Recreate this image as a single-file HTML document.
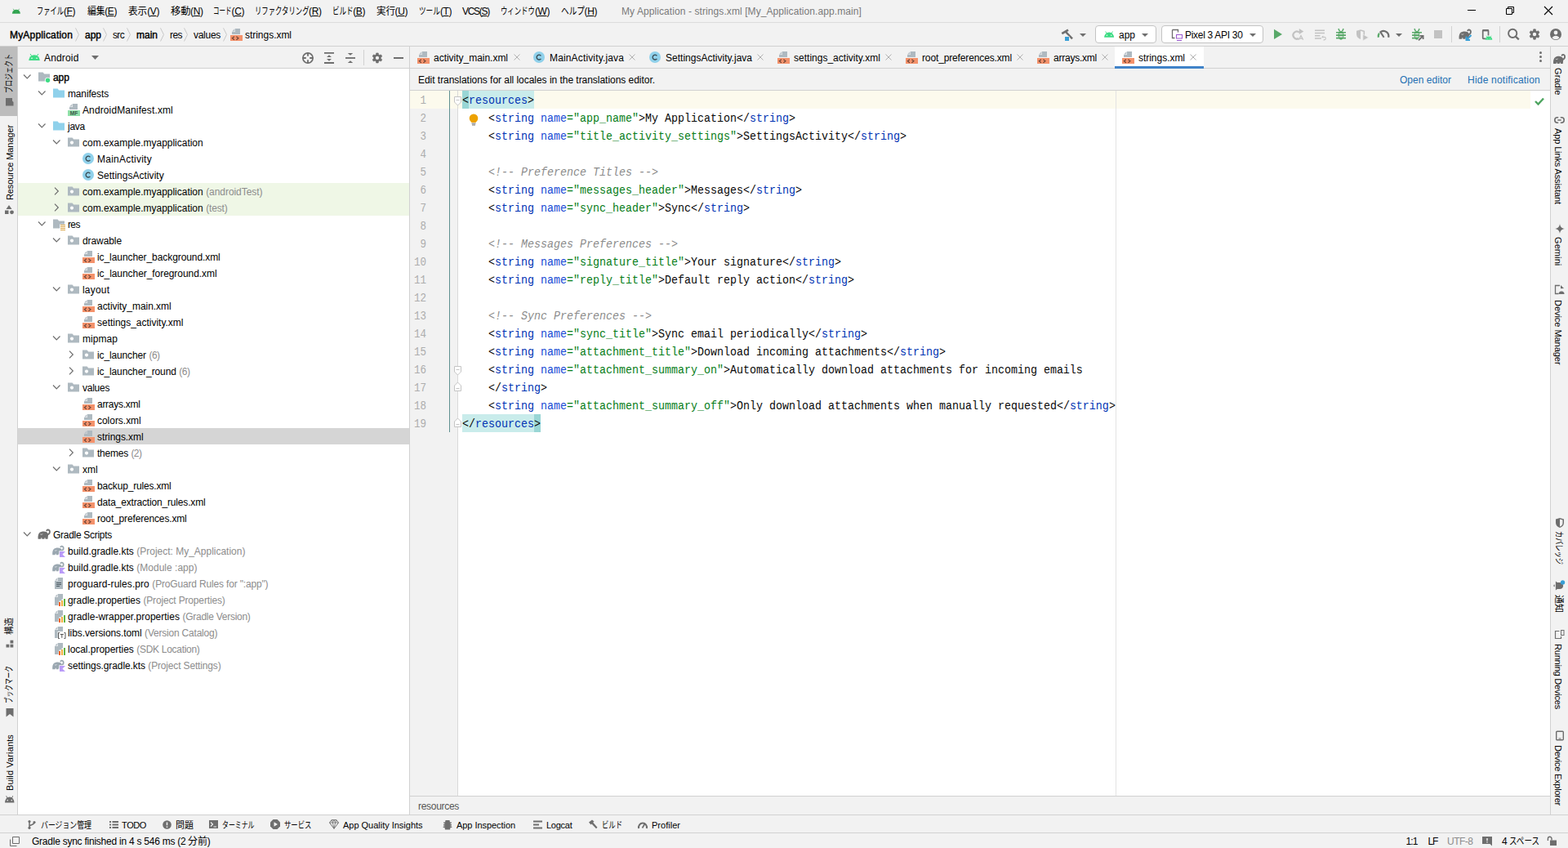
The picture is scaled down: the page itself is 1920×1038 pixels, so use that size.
<!DOCTYPE html><html><head><meta charset="utf-8"><title>Android Studio</title><style>
html,body{margin:0;padding:0}
body{width:1920px;height:1038px;overflow:hidden;position:relative;background:#f2f2f2;font-family:"Liberation Sans",sans-serif;font-size:12px;color:#000}
.t{position:absolute;white-space:pre;font-family:"Liberation Sans",sans-serif}
.m{position:absolute;white-space:pre;font-family:"Liberation Mono",monospace}
svg{display:block;overflow:visible}
svg.jp{display:inline-block}
svg.jp text{font-family:"Liberation Sans","Noto Sans CJK JP",sans-serif}
u{text-decoration:underline;text-underline-offset:1px}
i{font-style:italic}
</style></head><body><div style="position:absolute;left:0px;top:0px;width:1920px;height:1038px;background:#f2f2f2;"></div>
<div style="position:absolute;left:0px;top:27px;width:1920px;height:1px;background:#dcdcdc;"></div>
<div style="position:absolute;left:0px;top:56px;width:1920px;height:1px;background:#d1d1d1;"></div>
<div style="position:absolute;left:21px;top:57px;width:1px;height:941px;background:#d1d1d1;"></div>
<div style="position:absolute;left:22px;top:84px;width:479px;height:913px;background:#fff;"></div>
<div style="position:absolute;left:22px;top:83px;width:479px;height:1px;background:#d1d1d1;"></div>
<div style="position:absolute;left:501px;top:57px;width:1px;height:941px;background:#d1d1d1;"></div>
<div style="position:absolute;left:1898px;top:57px;width:1px;height:941px;background:#d1d1d1;"></div>
<div style="position:absolute;left:0px;top:997px;width:1920px;height:1px;background:#d1d1d1;"></div>
<div style="position:absolute;left:0px;top:1019px;width:1920px;height:1px;background:#d1d1d1;"></div>
<svg style="position:absolute;left:14.1px;top:7.9px" width="11.8" height="11.8" viewBox="0 0 16 16" ><path d="M1.2 12a6.8 6.8 0 0 1 13.6 0z" fill="#34a853"/><path d="M3.3 4.3 4.8 6.8M12.7 4.3 11.2 6.8" stroke="#34a853" stroke-width="1" stroke-linecap="round"/><circle cx="5" cy="9.3" r=".8" fill="#2a7d40"/><circle cx="11" cy="9.3" r=".8" fill="#2a7d40"/></svg>
<div style="position:absolute;left:45px;top:6.26px;line-height:0"><svg class="jp" width="32.88" height="16" viewBox="0 0 32.88 16" fill="#000" style=""><text x="0" y="12.3" font-size="12" textLength="32.88" lengthAdjust="spacingAndGlyphs">ファイル</text></svg></div>
<div class="t" style="left:77.8765625px;top:6.34px;font-size:12px;line-height:16px;color:#000;letter-spacing:-0.4px">(<u>F</u>)</div>
<div style="position:absolute;left:106.5px;top:6.26px;line-height:0"><svg class="jp" width="21.70" height="16" viewBox="0 0 21.70 16" fill="#000" style=""><text x="0" y="12.3" font-size="12" textLength="21.7" lengthAdjust="spacingAndGlyphs">編集</text></svg></div>
<div class="t" style="left:128.2015625px;top:6.34px;font-size:12px;line-height:16px;color:#000;letter-spacing:-0.4px">(<u>E</u>)</div>
<div style="position:absolute;left:157px;top:6.26px;line-height:0"><svg class="jp" width="23.20" height="16" viewBox="0 0 23.20 16" fill="#000" style=""><text x="0" y="12.3" font-size="12" textLength="23.2" lengthAdjust="spacingAndGlyphs">表示</text></svg></div>
<div class="t" style="left:180.2015625px;top:6.34px;font-size:12px;line-height:16px;color:#000;letter-spacing:-0.4px">(<u>V</u>)</div>
<div style="position:absolute;left:208.5px;top:6.26px;line-height:0"><svg class="jp" width="24.54" height="16" viewBox="0 0 24.54 16" fill="#000" style=""><text x="0" y="12.3" font-size="12" textLength="24.54" lengthAdjust="spacingAndGlyphs">移動</text></svg></div>
<div class="t" style="left:233.040625px;top:6.34px;font-size:12px;line-height:16px;color:#000;letter-spacing:-0.4px">(<u>N</u>)</div>
<div style="position:absolute;left:261px;top:6.26px;line-height:0"><svg class="jp" width="22.54" height="16" viewBox="0 0 22.54 16" fill="#000" style=""><text x="0" y="12.3" font-size="12" textLength="22.54" lengthAdjust="spacingAndGlyphs">コード</text></svg></div>
<div class="t" style="left:283.540625px;top:6.34px;font-size:12px;line-height:16px;color:#000;letter-spacing:-0.4px">(<u>C</u>)</div>
<div style="position:absolute;left:311.5px;top:6.26px;line-height:0"><svg class="jp" width="66.54" height="16" viewBox="0 0 66.54 16" fill="#000" style=""><text x="0" y="12.3" font-size="12" textLength="66.54" lengthAdjust="spacingAndGlyphs">リファクタリング</text></svg></div>
<div class="t" style="left:378.040625px;top:6.34px;font-size:12px;line-height:16px;color:#000;letter-spacing:-0.4px">(<u>R</u>)</div>
<div style="position:absolute;left:406.5px;top:6.26px;line-height:0"><svg class="jp" width="25.70" height="16" viewBox="0 0 25.70 16" fill="#000" style=""><text x="0" y="12.3" font-size="12" textLength="25.7" lengthAdjust="spacingAndGlyphs">ビルド</text></svg></div>
<div class="t" style="left:432.2015625px;top:6.34px;font-size:12px;line-height:16px;color:#000;letter-spacing:-0.4px">(<u>B</u>)</div>
<div style="position:absolute;left:460.5px;top:6.26px;line-height:0"><svg class="jp" width="23.04" height="16" viewBox="0 0 23.04 16" fill="#000" style=""><text x="0" y="12.3" font-size="12" textLength="23.04" lengthAdjust="spacingAndGlyphs">実行</text></svg></div>
<div class="t" style="left:483.540625px;top:6.34px;font-size:12px;line-height:16px;color:#000;letter-spacing:-0.4px">(<u>U</u>)</div>
<div style="position:absolute;left:513px;top:6.26px;line-height:0"><svg class="jp" width="25.88" height="16" viewBox="0 0 25.88 16" fill="#000" style=""><text x="0" y="12.3" font-size="12" textLength="25.88" lengthAdjust="spacingAndGlyphs">ツール</text></svg></div>
<div class="t" style="left:538.8765625px;top:6.34px;font-size:12px;line-height:16px;color:#000;letter-spacing:-0.4px">(<u>T</u>)</div>
<div class="t" style="left:566px;top:6.34px;font-size:12px;line-height:16px;color:#000;letter-spacing:-1.279px;">VCS(<u>S</u>)</div>
<div style="position:absolute;left:613px;top:6.26px;line-height:0"><svg class="jp" width="41.88" height="16" viewBox="0 0 41.88 16" fill="#000" style=""><text x="0" y="12.3" font-size="12" textLength="41.88" lengthAdjust="spacingAndGlyphs">ウィンドウ</text></svg></div>
<div class="t" style="left:654.8796875px;top:6.34px;font-size:12px;line-height:16px;color:#000;letter-spacing:-0.4px">(<u>W</u>)</div>
<div style="position:absolute;left:686.5px;top:6.26px;line-height:0"><svg class="jp" width="29.04" height="16" viewBox="0 0 29.04 16" fill="#000" style=""><text x="0" y="12.3" font-size="12" textLength="29.04" lengthAdjust="spacingAndGlyphs">ヘルプ</text></svg></div>
<div class="t" style="left:715.540625px;top:6.34px;font-size:12px;line-height:16px;color:#000;letter-spacing:-0.4px">(<u>H</u>)</div>
<div class="t" style="left:761px;top:6.34px;font-size:12px;line-height:16px;color:#7a7a7a;letter-spacing:0.084px;">My Application - strings.xml [My_Application.app.main]</div>
<svg style="position:absolute;left:1780px;top:0" width="140" height="27" viewBox="0 0 140 27"><path d="M17 12.5h10" stroke="#000" stroke-width="1"/><path d="M64.5 10.5h7v7h-7zM66.5 10.5v-2h7v7h-2" fill="none" stroke="#000" stroke-width="1"/><path d="M111 8l10 10M121 8l-10 10" stroke="#000" stroke-width="1.1"/></svg>
<div class="t" style="left:12px;top:34.84px;font-size:12px;line-height:16px;color:#000;letter-spacing:0.177px;-webkit-text-stroke:0.4px #000;">MyApplication</div>
<div class="t" style="left:104px;top:34.84px;font-size:12px;line-height:16px;color:#000;letter-spacing:-0.007px;-webkit-text-stroke:0.4px #000;">app</div>
<div class="t" style="left:138px;top:34.84px;font-size:12px;line-height:16px;color:#000;letter-spacing:-0.666px;">src</div>
<div class="t" style="left:167px;top:34.84px;font-size:12px;line-height:16px;color:#000;letter-spacing:-0.002px;-webkit-text-stroke:0.4px #000;">main</div>
<div class="t" style="left:208px;top:34.84px;font-size:12px;line-height:16px;color:#000;letter-spacing:-0.557px;">res</div>
<div class="t" style="left:237px;top:34.84px;font-size:12px;line-height:16px;color:#000;letter-spacing:-0.281px;">values</div>
<svg style="position:absolute;left:91px;top:34px" width="8" height="17" viewBox="0 0 8 17"><path d="M1.5 .3 5.500 8.400 1.500 16.500" fill="none" stroke="#c8c8c8" stroke-width="1"/></svg>
<svg style="position:absolute;left:125px;top:34px" width="8" height="17" viewBox="0 0 8 17"><path d="M1.5 .3 5.500 8.400 1.500 16.500" fill="none" stroke="#c8c8c8" stroke-width="1"/></svg>
<svg style="position:absolute;left:154px;top:34px" width="8" height="17" viewBox="0 0 8 17"><path d="M1.5 .3 5.500 8.400 1.500 16.500" fill="none" stroke="#c8c8c8" stroke-width="1"/></svg>
<svg style="position:absolute;left:195px;top:34px" width="8" height="17" viewBox="0 0 8 17"><path d="M1.5 .3 5.500 8.400 1.500 16.500" fill="none" stroke="#c8c8c8" stroke-width="1"/></svg>
<svg style="position:absolute;left:224px;top:34px" width="8" height="17" viewBox="0 0 8 17"><path d="M1.5 .3 5.500 8.400 1.500 16.500" fill="none" stroke="#c8c8c8" stroke-width="1"/></svg>
<svg style="position:absolute;left:272px;top:34px" width="8" height="17" viewBox="0 0 8 17"><path d="M1.5 .3 5.500 8.400 1.500 16.500" fill="none" stroke="#c8c8c8" stroke-width="1"/></svg>
<svg style="position:absolute;left:281px;top:34px" width="16" height="16" viewBox="0 0 16 16" ><path d="M7 1h6v7H3V5h4z" fill="#aeb9c0"/><path d="M6.5 1v3.500H3z" fill="#b9c2c9"/><rect x="1" y="9" width="15" height="7" fill="#f4926b"/><path d="M5.9 10.7 3.3 12.7l2.6 2M8.4 10.7l2.6 2-2.6 2" fill="none" stroke="#6b4437" stroke-width="1.1"/></svg>
<div class="t" style="left:300px;top:34.84px;font-size:12px;line-height:16px;color:#000;letter-spacing:-0.031px;">strings.xml</div>
<svg style="position:absolute;left:1299px;top:34px" width="16" height="16" viewBox="0 0 16 16" ><path d="M1.3 7.2 9 2.6" stroke="#6e6e6e" stroke-width="2.6" fill="none"/><path d="M6 5l8 8.3" stroke="#6e6e6e" stroke-width="2.5" fill="none"/><rect x="4.5" y="10.5" width="6" height="6" fill="#f2f2f2"/><rect x="5" y="11" width="5" height="5" fill="#389fd6"/></svg>
<svg style="position:absolute;left:1322px;top:41px" width="8" height="4" viewBox="0 0 8 4"><path d="M0 0h8L4.0 4z" fill="#6e6e6e"/></svg>
<div style="position:absolute;left:1341px;top:31px;width:72.5px;height:20px;border:1px solid #c4c4c4;border-radius:4px;background:#fff"></div>
<svg style="position:absolute;left:1350.8px;top:34.8px" width="14.2" height="14.2" viewBox="0 0 16 16" ><path d="M1.2 12a6.8 6.8 0 0 1 13.6 0z" fill="#3ddc84"/><path d="M3.3 4.3 4.8 6.8M12.7 4.3 11.2 6.8" stroke="#3ddc84" stroke-width="1" stroke-linecap="round"/><circle cx="5" cy="9.3" r=".8" fill="#fff"/><circle cx="11" cy="9.3" r=".8" fill="#fff"/></svg>
<div class="t" style="left:1370px;top:34.84px;font-size:12px;line-height:16px;color:#000;letter-spacing:-0.007px;">app</div>
<svg style="position:absolute;left:1397.5px;top:41px" width="8" height="4" viewBox="0 0 8 4"><path d="M0 0h8L4.0 4z" fill="#6e6e6e"/></svg>
<div style="position:absolute;left:1422px;top:31px;width:123px;height:20px;border:1px solid #c4c4c4;border-radius:4px;background:#fff"></div>
<svg style="position:absolute;left:1432px;top:34px" width="16" height="16" viewBox="0 0 16 16" ><path d="M3.5 2.5h7v3M3.5 2.5v10h3" fill="none" stroke="#6e6e6e" stroke-width="1.3"/><rect x="8.5" y="8.5" width="7" height="4.5" fill="none" stroke="#9b59d0" stroke-width="1"/><path d="M9 15.5h6" stroke="#9b59d0" stroke-width="1"/></svg>
<div class="t" style="left:1451px;top:34.84px;font-size:12px;line-height:16px;color:#000;letter-spacing:-0.301px;">Pixel 3 API 30</div>
<svg style="position:absolute;left:1529.5px;top:41px" width="8" height="4" viewBox="0 0 8 4"><path d="M0 0h8L4.0 4z" fill="#6e6e6e"/></svg>
<svg style="position:absolute;left:1556px;top:34px" width="16" height="16" viewBox="0 0 16 16" ><path d="M4 1.800l10 6.1-10 6.100z" fill="#59a869"/></svg>
<svg style="position:absolute;left:1582px;top:34px" width="16" height="16" viewBox="0 0 16 16" ><path d="M8.9 5.650A4.5 4.5 0 1 0 8.250 13" fill="none" stroke="#c2c2c2" stroke-width="2.2"/><path d="M8.8 1l5.5 3.6-5.5 3.400z" fill="#c2c2c2"/><path d="M8.3 14.8 11 9.500l2.7 5.300M9.3 13.200h3.4" fill="none" stroke="#c2c2c2" stroke-width="1.2"/></svg>
<svg style="position:absolute;left:1608px;top:34px" width="16" height="16" viewBox="0 0 16 16" ><path d="M2 3.300h12M2 6.500h12M2 9.800h6.500M2 13h8" stroke="#c2c2c2" stroke-width="1.6"/><path d="M11.8 11.300h1.700a1.8 1.8 0 0 1 0 3.600h-1" fill="none" stroke="#c2c2c2" stroke-width="1.1"/><path d="M12.3 9.500v3.600l-2.2-1.800z" fill="#c2c2c2"/></svg>
<svg style="position:absolute;left:1634px;top:34px" width="16" height="16" viewBox="0 0 16 16" ><ellipse cx="8" cy="9.2" rx="3.5" ry="5.5" fill="#59a869"/><path d="M6.5 4.5 4.900 1.200M9.500 4.500l1.600-3.300" stroke="#59a869" stroke-width="1.500" fill="none"/><path d="M2 5.700h12M2 9.100h12M2 12.600h12" stroke="#59a869" stroke-width="1.600" fill="none"/><path d="M5.700 7.500h4.600M5.700 10.800h4.600" stroke="#f2f2f2" stroke-width="1.200"/></svg>
<svg style="position:absolute;left:1660px;top:34px" width="16" height="16" viewBox="0 0 16 16" ><path d="M6 2.2 1 3.800V8c0 3 2 5 5 6z" fill="#c2c2c2"/><path d="M6 2.900l4.300 1.400V8c0 1-.2 1.800-.7 2.600" fill="none" stroke="#c2c2c2" stroke-width="1.6"/><path d="M8.9 8l6.9 3.900-6.9 3.800z" fill="#c2c2c2" stroke="#f2f2f2" stroke-width=".6"/></svg>
<svg style="position:absolute;left:1686px;top:33px" width="16" height="16" viewBox="0 0 16 16" ><path d="M4.850 5.840A6.300 6.300 0 0 1 14.140 12.700" fill="none" stroke="#6e6e6e" stroke-width="2.200"/><path d="M1.860 12.700A6.300 6.300 0 0 1 2.900 7.600" fill="none" stroke="#59a869" stroke-width="2.200"/><path d="M8.600 12.700 3.800 5.400" stroke="#6e6e6e" stroke-width="2"/></svg>
<svg style="position:absolute;left:1709px;top:41px" width="8" height="4" viewBox="0 0 8 4"><path d="M0 0h8L4.0 4z" fill="#6e6e6e"/></svg>
<svg style="position:absolute;left:1728px;top:34px" width="16" height="16" viewBox="0 0 16 16" ><g transform="translate(-1 0)"><ellipse cx="8" cy="9.2" rx="3.5" ry="5.5" fill="#59a869"/><path d="M6.5 4.5 4.900 1.200M9.500 4.500l1.600-3.300" stroke="#59a869" stroke-width="1.500" fill="none"/><path d="M2 5.700h12M2 9.100h12M2 12.600h12" stroke="#59a869" stroke-width="1.600" fill="none"/><path d="M5.700 7.500h4.600M5.700 10.800h4.600" stroke="#f2f2f2" stroke-width="1.200"/></g><path d="M8.800 15.500 14.300 10M10 9.700h4.700v4.700" stroke="#f2f2f2" stroke-width="3.200" fill="none"/><path d="M9 15.300 14.300 10M10.300 9.800h4.300v4.300" stroke="#6e6e6e" stroke-width="1.800" fill="none"/></svg>
<div style="position:absolute;left:1756px;top:37px;width:10px;height:10px;background:#c2c2c2;"></div>
<div style="position:absolute;left:1777px;top:32px;width:1px;height:20px;background:#d1d1d1;"></div>
<svg style="position:absolute;left:1786px;top:34px" width="16" height="16" viewBox="0 0 16 16" ><path d="M.6 13.700C.2 10 1 7 3 5.600 5 4.200 8.600 4 10.600 5c1.300.600 2 1.600 2.300 2.800.200 1 .100 2-.100 3l-.300 2.900H9.600l-.200-1.500h-.800l-.200 1.500H5.400l-.200-1.500h-.800l-.200 1.500z" fill="#6e6e6e"/><path d="M11.500 8.600c2 0 3.500-1.800 3.400-3.800-.100-1.700-1.300-2.500-2.400-2.300-.600.100-1 .400-1.200.800" fill="none" stroke="#6e6e6e" stroke-width="1.900" stroke-linecap="round"/><path d="M3.400 7.800c.900.700 2.100.600 2.900-.300" stroke="#fff" stroke-width=".8" fill="none" opacity=".8"/><path d="M15.5 9 10 14.500M9.500 10.500v4.500H14" stroke="#389fd6" stroke-width="2" fill="none"/></svg>
<svg style="position:absolute;left:1812px;top:34px" width="16" height="16" viewBox="0 0 16 16" ><path d="M10.500 9.500V3.600a.8.8 0 0 0-.8-.8H4.500a.8.8 0 0 0-.8.8v9a.8.8 0 0 0 .8.8H7" fill="none" stroke="#6e6e6e" stroke-width="1.700"/><path d="M3.700 3.200h6.800" stroke="#6e6e6e" stroke-width="2.400"/><g transform="translate(6.060 7.360) scale(.62)"><path d="M1.2 12a6.8 6.8 0 0 1 13.6 0z" fill="#3ddc84"/><path d="M3.3 4.3 4.8 6.8M12.7 4.3 11.2 6.8" stroke="#3ddc84" stroke-width="1" stroke-linecap="round"/><circle cx="5" cy="9.3" r=".8" fill="#fff"/><circle cx="11" cy="9.3" r=".8" fill="#fff"/></g></svg>
<div style="position:absolute;left:1836px;top:32px;width:1px;height:20px;background:#d1d1d1;"></div>
<svg style="position:absolute;left:1845px;top:34px" width="16" height="16" viewBox="0 0 16 16" ><circle cx="7.2" cy="6.9" r="5.1" fill="none" stroke="#6e6e6e" stroke-width="1.9"/><path d="M10.8 10.6 14.8 14.400" stroke="#6e6e6e" stroke-width="2.200"/></svg>
<svg style="position:absolute;left:1871px;top:34.1px" width="16" height="16" viewBox="0 0 16 16" ><path d="M6.41 3.79L6.75 1.83L9.25 1.83L9.59 3.79L10.85 4.52L12.72 3.83L13.97 6.00L12.44 7.27L12.44 8.73L13.97 10.00L12.72 12.17L10.85 11.48L9.59 12.21L9.25 14.17L6.75 14.17L6.41 12.21L5.15 11.48L3.28 12.17L2.03 10.00L3.56 8.73L3.56 7.27L2.03 6.00L3.28 3.83L5.15 4.52z" fill="#6e6e6e" stroke="#6e6e6e" stroke-width=".7" stroke-linejoin="round"/><circle cx="8" cy="8" r="2.2" fill="#f2f2f2"/></svg>
<svg style="position:absolute;left:1897px;top:34px" width="16" height="16" viewBox="0 0 16 16" ><circle cx="8" cy="8" r="7" fill="#6e6e6e"/><circle cx="8" cy="6" r="2.4" fill="#f2f2f2"/><path d="M3.5 12.3c1-1.8 2.5-2.6 4.5-2.6s3.5.8 4.5 2.6A5.8 5.8 0 0 1 8 14.3a5.8 5.8 0 0 1-4.5-2z" fill="#f2f2f2"/></svg>
<svg style="position:absolute;left:34px;top:62px" width="16" height="16" viewBox="0 0 16 16" ><path d="M1.2 12a6.8 6.8 0 0 1 13.6 0z" fill="#3ddc84"/><path d="M3.3 4.3 4.8 6.8M12.7 4.3 11.2 6.8" stroke="#3ddc84" stroke-width="1" stroke-linecap="round"/><circle cx="5" cy="9.3" r=".8" fill="#fff"/><circle cx="11" cy="9.3" r=".8" fill="#fff"/></svg>
<div class="t" style="left:54px;top:62.84px;font-size:12px;line-height:16px;color:#000;letter-spacing:0.163px;">Android</div>
<svg style="position:absolute;left:112px;top:68px" width="9" height="5" viewBox="0 0 9 5"><path d="M0 0h9L4.5 5z" fill="#6e6e6e"/></svg>
<svg style="position:absolute;left:369px;top:63px" width="16" height="16" viewBox="0 0 16 16" ><circle cx="8" cy="8" r="6.1" fill="none" stroke="#6e6e6e" stroke-width="1.7"/><path d="M8 1.500v4.300M8 10.200v4.300M1.500 8h4.300M10.200 8h4.300" stroke="#6e6e6e" stroke-width="1.800"/></svg>
<svg style="position:absolute;left:395px;top:63px" width="16" height="16" viewBox="0 0 16 16" ><path d="M2 1.900h12M2 14h12" stroke="#6e6e6e" stroke-width="1.800"/><path d="M8 4.300 11 7H5zM8 11.700 5 9h6z" fill="#6e6e6e"/></svg>
<svg style="position:absolute;left:421px;top:63px" width="16" height="16" viewBox="0 0 16 16" ><path d="M2 8h12" stroke="#6e6e6e" stroke-width="1.800"/><path d="M4.800 1.900h6.400L8 4.800zM8 11.200l3.200 2.900H4.800z" fill="#6e6e6e"/></svg>
<div style="position:absolute;left:445px;top:61px;width:1px;height:19px;background:#d1d1d1;"></div>
<svg style="position:absolute;left:454px;top:63px" width="16" height="16" viewBox="0 0 16 16" ><g transform="translate(.2 .2) scale(.97)"><path d="M6.41 3.79L6.75 1.83L9.25 1.83L9.59 3.79L10.85 4.52L12.72 3.83L13.97 6.00L12.44 7.27L12.44 8.73L13.97 10.00L12.72 12.17L10.85 11.48L9.59 12.21L9.25 14.17L6.75 14.17L6.41 12.21L5.15 11.48L3.28 12.17L2.03 10.00L3.56 8.73L3.56 7.27L2.03 6.00L3.28 3.83L5.15 4.52z" fill="#6e6e6e" stroke="#6e6e6e" stroke-width=".7" stroke-linejoin="round"/><circle cx="8" cy="8" r="2.2" fill="#f2f2f2"/></g></svg>
<div style="position:absolute;left:482px;top:70px;width:12px;height:2px;background:#6e6e6e;"></div>
<svg style="position:absolute;left:24.7px;top:86.5px" width="16" height="16" viewBox="0 0 16 16" ><path d="M4 4.5 8.25 8.8 12.5 4.5" fill="none" stroke="#6e6e6e" stroke-width="1.2"/></svg>
<svg style="position:absolute;left:46px;top:86px" width="16" height="16" viewBox="0 0 16 16" ><path d="M1 2.5h5.6l1.6 2H15v9H1z" fill="#aeb9c0"/><circle cx="12.5" cy="12.3" r="3.6" fill="#fff"/><circle cx="12.5" cy="12.3" r="2.7" fill="#3ddc84"/></svg>
<div class="t" style="left:65px;top:86.84px;font-size:12px;line-height:16px;color:#000;letter-spacing:-0.107px;-webkit-text-stroke:0.4px #000;">app</div>
<svg style="position:absolute;left:42.7px;top:106.5px" width="16" height="16" viewBox="0 0 16 16" ><path d="M4 4.5 8.25 8.8 12.5 4.5" fill="none" stroke="#6e6e6e" stroke-width="1.2"/></svg>
<svg style="position:absolute;left:64px;top:106px" width="16" height="16" viewBox="0 0 16 16" ><path d="M1 2.5h5.6l1.6 2H15v9H1z" fill="#90d1eb"/></svg>
<div class="t" style="left:83px;top:106.84px;font-size:12px;line-height:16px;color:#000;letter-spacing:-0.150px;">manifests</div>
<svg style="position:absolute;left:82px;top:126px" width="16" height="16" viewBox="0 0 16 16" ><path d="M7 1h6v7H3V5h4z" fill="#aeb9c0"/><path d="M6.5 1v3.500H3z" fill="#b9c2c9"/><rect x="1" y="9" width="15" height="7" fill="#8fe0aa"/><text x="8.5" y="15" font-family="Liberation Sans" font-weight="bold" font-size="6.6" fill="#3c5a48" text-anchor="middle">MF</text></svg>
<div class="t" style="left:101px;top:126.84px;font-size:12px;line-height:16px;color:#000;letter-spacing:0.115px;">AndroidManifest.xml</div>
<svg style="position:absolute;left:42.7px;top:146.5px" width="16" height="16" viewBox="0 0 16 16" ><path d="M4 4.5 8.25 8.8 12.5 4.5" fill="none" stroke="#6e6e6e" stroke-width="1.2"/></svg>
<svg style="position:absolute;left:64px;top:146px" width="16" height="16" viewBox="0 0 16 16" ><path d="M1 2.5h5.6l1.6 2H15v9H1z" fill="#90d1eb"/></svg>
<div class="t" style="left:83px;top:146.84px;font-size:12px;line-height:16px;color:#000;letter-spacing:-0.253px;">java</div>
<svg style="position:absolute;left:60.7px;top:166.5px" width="16" height="16" viewBox="0 0 16 16" ><path d="M4 4.5 8.25 8.8 12.5 4.5" fill="none" stroke="#6e6e6e" stroke-width="1.2"/></svg>
<svg style="position:absolute;left:82px;top:166px" width="16" height="16" viewBox="0 0 16 16" ><path d="M1 2.5h5.6l1.6 2H15v9H1z" fill="#aeb9c0"/><circle cx="6" cy="8.6" r="2.05" fill="#fff"/></svg>
<div class="t" style="left:101px;top:166.84px;font-size:12px;line-height:16px;color:#000;letter-spacing:-0.015px;">com.example.myapplication</div>
<svg style="position:absolute;left:100px;top:186px" width="16" height="16" viewBox="0 0 16 16" ><circle cx="8" cy="8" r="7" fill="#90d1eb"/><path d="M10.4 6.4A2.9 2.9 0 1 0 10.4 9.8" fill="none" stroke="#36474f" stroke-width="1.3"/></svg>
<div class="t" style="left:119px;top:186.84px;font-size:12px;line-height:16px;color:#000;letter-spacing:0.240px;">MainActivity</div>
<svg style="position:absolute;left:100px;top:206px" width="16" height="16" viewBox="0 0 16 16" ><circle cx="8" cy="8" r="7" fill="#90d1eb"/><path d="M10.4 6.4A2.9 2.9 0 1 0 10.4 9.8" fill="none" stroke="#36474f" stroke-width="1.3"/></svg>
<div class="t" style="left:119px;top:206.84px;font-size:12px;line-height:16px;color:#000;letter-spacing:0.021px;">SettingsActivity</div>
<div style="position:absolute;left:22px;top:224px;width:479px;height:20px;background:#eff7e6;"></div>
<svg style="position:absolute;left:61px;top:226px" width="16" height="16" viewBox="0 0 16 16" ><path d="M6 3.7 10.3 8 6 12.3" fill="none" stroke="#6e6e6e" stroke-width="1.2"/></svg>
<svg style="position:absolute;left:82px;top:226px" width="16" height="16" viewBox="0 0 16 16" ><path d="M1 2.5h5.6l1.6 2H15v9H1z" fill="#aeb9c0"/><circle cx="6" cy="8.6" r="2.05" fill="#fff"/></svg>
<div class="t" style="left:101px;top:226.84px;font-size:12px;line-height:16px;color:#000;letter-spacing:-0.015px;">com.example.myapplication</div>
<div class="t" style="left:252.2px;top:226.84px;font-size:12px;line-height:16px;color:#8c8c8c;letter-spacing:-0.064px;">(androidTest)</div>
<div style="position:absolute;left:22px;top:244px;width:479px;height:20px;background:#eff7e6;"></div>
<svg style="position:absolute;left:61px;top:246px" width="16" height="16" viewBox="0 0 16 16" ><path d="M6 3.7 10.3 8 6 12.3" fill="none" stroke="#6e6e6e" stroke-width="1.2"/></svg>
<svg style="position:absolute;left:82px;top:246px" width="16" height="16" viewBox="0 0 16 16" ><path d="M1 2.5h5.6l1.6 2H15v9H1z" fill="#aeb9c0"/><circle cx="6" cy="8.6" r="2.05" fill="#fff"/></svg>
<div class="t" style="left:101px;top:246.84px;font-size:12px;line-height:16px;color:#000;letter-spacing:-0.015px;">com.example.myapplication</div>
<div class="t" style="left:252.2px;top:246.84px;font-size:12px;line-height:16px;color:#8c8c8c;letter-spacing:-0.156px;">(test)</div>
<svg style="position:absolute;left:42.7px;top:266.5px" width="16" height="16" viewBox="0 0 16 16" ><path d="M4 4.5 8.25 8.8 12.5 4.5" fill="none" stroke="#6e6e6e" stroke-width="1.2"/></svg>
<svg style="position:absolute;left:64px;top:266px" width="16" height="16" viewBox="0 0 16 16" ><path d="M1 2.5h5.6l1.6 2H15v4H9.2v5H1z" fill="#aeb9c0"/><path d="M10 9.5h6M10 11.5h6M10 13.5h6M10 15.5h6" stroke="#d9a343" stroke-width="1"/></svg>
<div class="t" style="left:83px;top:266.84px;font-size:12px;line-height:16px;color:#000;letter-spacing:-0.623px;">res</div>
<svg style="position:absolute;left:60.7px;top:286.5px" width="16" height="16" viewBox="0 0 16 16" ><path d="M4 4.5 8.25 8.8 12.5 4.5" fill="none" stroke="#6e6e6e" stroke-width="1.2"/></svg>
<svg style="position:absolute;left:82px;top:286px" width="16" height="16" viewBox="0 0 16 16" ><path d="M1 2.5h5.6l1.6 2H15v9H1z" fill="#aeb9c0"/><circle cx="6" cy="8.6" r="2.05" fill="#fff"/></svg>
<div class="t" style="left:101px;top:286.84px;font-size:12px;line-height:16px;color:#000;letter-spacing:-0.087px;">drawable</div>
<svg style="position:absolute;left:100px;top:306px" width="16" height="16" viewBox="0 0 16 16" ><path d="M7 1h6v7H3V5h4z" fill="#aeb9c0"/><path d="M6.5 1v3.500H3z" fill="#b9c2c9"/><rect x="1" y="9" width="15" height="7" fill="#f4926b"/><path d="M5.9 10.7 3.3 12.7l2.6 2M8.4 10.7l2.6 2-2.6 2" fill="none" stroke="#6b4437" stroke-width="1.1"/></svg>
<div class="t" style="left:119px;top:306.84px;font-size:12px;line-height:16px;color:#000;letter-spacing:-0.079px;">ic_launcher_background.xml</div>
<svg style="position:absolute;left:100px;top:326px" width="16" height="16" viewBox="0 0 16 16" ><path d="M7 1h6v7H3V5h4z" fill="#aeb9c0"/><path d="M6.5 1v3.500H3z" fill="#b9c2c9"/><rect x="1" y="9" width="15" height="7" fill="#f4926b"/><path d="M5.9 10.7 3.3 12.7l2.6 2M8.4 10.7l2.6 2-2.6 2" fill="none" stroke="#6b4437" stroke-width="1.1"/></svg>
<div class="t" style="left:119px;top:326.84px;font-size:12px;line-height:16px;color:#000;letter-spacing:-0.061px;">ic_launcher_foreground.xml</div>
<svg style="position:absolute;left:60.7px;top:346.5px" width="16" height="16" viewBox="0 0 16 16" ><path d="M4 4.5 8.25 8.8 12.5 4.5" fill="none" stroke="#6e6e6e" stroke-width="1.2"/></svg>
<svg style="position:absolute;left:82px;top:346px" width="16" height="16" viewBox="0 0 16 16" ><path d="M1 2.5h5.6l1.6 2H15v9H1z" fill="#aeb9c0"/><circle cx="6" cy="8.6" r="2.05" fill="#fff"/></svg>
<div class="t" style="left:101px;top:346.84px;font-size:12px;line-height:16px;color:#000;letter-spacing:0.197px;">layout</div>
<svg style="position:absolute;left:100px;top:366px" width="16" height="16" viewBox="0 0 16 16" ><path d="M7 1h6v7H3V5h4z" fill="#aeb9c0"/><path d="M6.5 1v3.500H3z" fill="#b9c2c9"/><rect x="1" y="9" width="15" height="7" fill="#f4926b"/><path d="M5.9 10.7 3.3 12.7l2.6 2M8.4 10.7l2.6 2-2.6 2" fill="none" stroke="#6b4437" stroke-width="1.1"/></svg>
<div class="t" style="left:119px;top:366.84px;font-size:12px;line-height:16px;color:#000;letter-spacing:-0.044px;">activity_main.xml</div>
<svg style="position:absolute;left:100px;top:386px" width="16" height="16" viewBox="0 0 16 16" ><path d="M7 1h6v7H3V5h4z" fill="#aeb9c0"/><path d="M6.5 1v3.500H3z" fill="#b9c2c9"/><rect x="1" y="9" width="15" height="7" fill="#f4926b"/><path d="M5.9 10.7 3.3 12.7l2.6 2M8.4 10.7l2.6 2-2.6 2" fill="none" stroke="#6b4437" stroke-width="1.1"/></svg>
<div class="t" style="left:119px;top:386.84px;font-size:12px;line-height:16px;color:#000;letter-spacing:-0.019px;">settings_activity.xml</div>
<svg style="position:absolute;left:60.7px;top:406.5px" width="16" height="16" viewBox="0 0 16 16" ><path d="M4 4.5 8.25 8.8 12.5 4.5" fill="none" stroke="#6e6e6e" stroke-width="1.2"/></svg>
<svg style="position:absolute;left:82px;top:406px" width="16" height="16" viewBox="0 0 16 16" ><path d="M1 2.5h5.6l1.6 2H15v9H1z" fill="#aeb9c0"/><circle cx="6" cy="8.6" r="2.05" fill="#fff"/></svg>
<div class="t" style="left:101px;top:406.84px;font-size:12px;line-height:16px;color:#000;letter-spacing:0.037px;">mipmap</div>
<svg style="position:absolute;left:79px;top:426px" width="16" height="16" viewBox="0 0 16 16" ><path d="M6 3.7 10.3 8 6 12.3" fill="none" stroke="#6e6e6e" stroke-width="1.2"/></svg>
<svg style="position:absolute;left:100px;top:426px" width="16" height="16" viewBox="0 0 16 16" ><path d="M1 2.5h5.6l1.6 2H15v9H1z" fill="#aeb9c0"/><circle cx="6" cy="8.6" r="2.05" fill="#fff"/></svg>
<div class="t" style="left:119px;top:426.84px;font-size:12px;line-height:16px;color:#000;letter-spacing:-0.134px;">ic_launcher</div>
<div class="t" style="left:182.4px;top:426.84px;font-size:12px;line-height:16px;color:#8c8c8c;letter-spacing:-0.489px;">(6)</div>
<svg style="position:absolute;left:79px;top:446px" width="16" height="16" viewBox="0 0 16 16" ><path d="M6 3.7 10.3 8 6 12.3" fill="none" stroke="#6e6e6e" stroke-width="1.2"/></svg>
<svg style="position:absolute;left:100px;top:446px" width="16" height="16" viewBox="0 0 16 16" ><path d="M1 2.5h5.6l1.6 2H15v9H1z" fill="#aeb9c0"/><circle cx="6" cy="8.6" r="2.05" fill="#fff"/></svg>
<div class="t" style="left:119px;top:446.84px;font-size:12px;line-height:16px;color:#000;letter-spacing:-0.114px;">ic_launcher_round</div>
<div class="t" style="left:219.3px;top:446.84px;font-size:12px;line-height:16px;color:#8c8c8c;letter-spacing:-0.489px;">(6)</div>
<svg style="position:absolute;left:60.7px;top:466.5px" width="16" height="16" viewBox="0 0 16 16" ><path d="M4 4.5 8.25 8.8 12.5 4.5" fill="none" stroke="#6e6e6e" stroke-width="1.2"/></svg>
<svg style="position:absolute;left:82px;top:466px" width="16" height="16" viewBox="0 0 16 16" ><path d="M1 2.5h5.6l1.6 2H15v9H1z" fill="#aeb9c0"/><circle cx="6" cy="8.6" r="2.05" fill="#fff"/></svg>
<div class="t" style="left:101px;top:466.84px;font-size:12px;line-height:16px;color:#000;letter-spacing:-0.248px;">values</div>
<svg style="position:absolute;left:100px;top:486px" width="16" height="16" viewBox="0 0 16 16" ><path d="M7 1h6v7H3V5h4z" fill="#aeb9c0"/><path d="M6.5 1v3.500H3z" fill="#b9c2c9"/><rect x="1" y="9" width="15" height="7" fill="#f4926b"/><path d="M5.9 10.7 3.3 12.7l2.6 2M8.4 10.7l2.6 2-2.6 2" fill="none" stroke="#6b4437" stroke-width="1.1"/></svg>
<div class="t" style="left:119px;top:486.84px;font-size:12px;line-height:16px;color:#000;letter-spacing:-0.274px;">arrays.xml</div>
<svg style="position:absolute;left:100px;top:506px" width="16" height="16" viewBox="0 0 16 16" ><path d="M7 1h6v7H3V5h4z" fill="#aeb9c0"/><path d="M6.5 1v3.500H3z" fill="#b9c2c9"/><rect x="1" y="9" width="15" height="7" fill="#f4926b"/><path d="M5.9 10.7 3.3 12.7l2.6 2M8.4 10.7l2.6 2-2.6 2" fill="none" stroke="#6b4437" stroke-width="1.1"/></svg>
<div class="t" style="left:119px;top:506.84px;font-size:12px;line-height:16px;color:#000;letter-spacing:-0.031px;">colors.xml</div>
<div style="position:absolute;left:22px;top:524px;width:479px;height:20px;background:#d5d5d5;"></div>
<svg style="position:absolute;left:100px;top:526px" width="16" height="16" viewBox="0 0 16 16" ><path d="M7 1h6v7H3V5h4z" fill="#aeb9c0"/><path d="M6.5 1v3.500H3z" fill="#b9c2c9"/><rect x="1" y="9" width="15" height="7" fill="#f4926b"/><path d="M5.9 10.7 3.3 12.7l2.6 2M8.4 10.7l2.6 2-2.6 2" fill="none" stroke="#6b4437" stroke-width="1.1"/></svg>
<div class="t" style="left:119px;top:526.84px;font-size:12px;line-height:16px;color:#000;letter-spacing:-0.076px;">strings.xml</div>
<svg style="position:absolute;left:79px;top:546px" width="16" height="16" viewBox="0 0 16 16" ><path d="M6 3.7 10.3 8 6 12.3" fill="none" stroke="#6e6e6e" stroke-width="1.2"/></svg>
<svg style="position:absolute;left:100px;top:546px" width="16" height="16" viewBox="0 0 16 16" ><path d="M1 2.5h5.6l1.6 2H15v9H1z" fill="#aeb9c0"/><circle cx="6" cy="8.6" r="2.05" fill="#fff"/></svg>
<div class="t" style="left:119px;top:546.84px;font-size:12px;line-height:16px;color:#000;letter-spacing:-0.225px;">themes</div>
<div class="t" style="left:160.5px;top:546.84px;font-size:12px;line-height:16px;color:#8c8c8c;letter-spacing:-0.622px;">(2)</div>
<svg style="position:absolute;left:60.7px;top:566.5px" width="16" height="16" viewBox="0 0 16 16" ><path d="M4 4.5 8.25 8.8 12.5 4.5" fill="none" stroke="#6e6e6e" stroke-width="1.2"/></svg>
<svg style="position:absolute;left:82px;top:566px" width="16" height="16" viewBox="0 0 16 16" ><path d="M1 2.5h5.6l1.6 2H15v9H1z" fill="#aeb9c0"/><circle cx="6" cy="8.6" r="2.05" fill="#fff"/></svg>
<div class="t" style="left:101px;top:566.84px;font-size:12px;line-height:16px;color:#000;letter-spacing:-0.021px;">xml</div>
<svg style="position:absolute;left:100px;top:586px" width="16" height="16" viewBox="0 0 16 16" ><path d="M7 1h6v7H3V5h4z" fill="#aeb9c0"/><path d="M6.5 1v3.500H3z" fill="#b9c2c9"/><rect x="1" y="9" width="15" height="7" fill="#f4926b"/><path d="M5.9 10.7 3.3 12.7l2.6 2M8.4 10.7l2.6 2-2.6 2" fill="none" stroke="#6b4437" stroke-width="1.1"/></svg>
<div class="t" style="left:119px;top:586.84px;font-size:12px;line-height:16px;color:#000;letter-spacing:-0.173px;">backup_rules.xml</div>
<svg style="position:absolute;left:100px;top:606px" width="16" height="16" viewBox="0 0 16 16" ><path d="M7 1h6v7H3V5h4z" fill="#aeb9c0"/><path d="M6.5 1v3.500H3z" fill="#b9c2c9"/><rect x="1" y="9" width="15" height="7" fill="#f4926b"/><path d="M5.9 10.7 3.3 12.7l2.6 2M8.4 10.7l2.6 2-2.6 2" fill="none" stroke="#6b4437" stroke-width="1.1"/></svg>
<div class="t" style="left:119px;top:606.84px;font-size:12px;line-height:16px;color:#000;letter-spacing:-0.169px;">data_extraction_rules.xml</div>
<svg style="position:absolute;left:100px;top:626px" width="16" height="16" viewBox="0 0 16 16" ><path d="M7 1h6v7H3V5h4z" fill="#aeb9c0"/><path d="M6.5 1v3.500H3z" fill="#b9c2c9"/><rect x="1" y="9" width="15" height="7" fill="#f4926b"/><path d="M5.9 10.7 3.3 12.7l2.6 2M8.4 10.7l2.6 2-2.6 2" fill="none" stroke="#6b4437" stroke-width="1.1"/></svg>
<div class="t" style="left:119px;top:626.84px;font-size:12px;line-height:16px;color:#000;letter-spacing:-0.156px;">root_preferences.xml</div>
<svg style="position:absolute;left:24.7px;top:646.5px" width="16" height="16" viewBox="0 0 16 16" ><path d="M4 4.5 8.25 8.8 12.5 4.5" fill="none" stroke="#6e6e6e" stroke-width="1.2"/></svg>
<svg style="position:absolute;left:46px;top:646px" width="16" height="16" viewBox="0 0 16 16" ><path d="M.6 13.700C.2 10 1 7 3 5.600 5 4.200 8.600 4 10.600 5c1.300.600 2 1.600 2.300 2.800.200 1 .100 2-.100 3l-.300 2.900H9.600l-.200-1.500h-.800l-.200 1.500H5.400l-.200-1.500h-.800l-.200 1.500z" fill="#6e6e6e"/><path d="M11.500 8.600c2 0 3.500-1.800 3.400-3.800-.100-1.700-1.300-2.500-2.400-2.300-.600.100-1 .400-1.200.800" fill="none" stroke="#6e6e6e" stroke-width="1.900" stroke-linecap="round"/><path d="M3.400 7.800c.900.700 2.100.600 2.900-.300" stroke="#fff" stroke-width=".8" fill="none" opacity=".8"/></svg>
<div class="t" style="left:65px;top:646.84px;font-size:12px;line-height:16px;color:#000;letter-spacing:-0.288px;">Gradle Scripts</div>
<svg style="position:absolute;left:64px;top:666px" width="16" height="16" viewBox="0 0 16 16" ><g transform="translate(-.3 .3) scale(.94)"><path d="M.6 13.700C.2 10 1 7 3 5.600 5 4.200 8.600 4 10.600 5c1.300.600 2 1.600 2.300 2.800.200 1 .100 2-.100 3l-.300 2.900H9.600l-.200-1.500h-.800l-.200 1.500H5.400l-.200-1.500h-.800l-.200 1.500z" fill="#9aa7b0"/><path d="M11.500 8.600c2 0 3.500-1.800 3.400-3.800-.100-1.700-1.300-2.500-2.400-2.300-.600.100-1 .400-1.200.800" fill="none" stroke="#9aa7b0" stroke-width="1.900" stroke-linecap="round"/><path d="M3.400 7.800c.900.700 2.100.600 2.900-.300" stroke="#fff" stroke-width=".8" fill="none" opacity=".8"/></g><rect x="8.3" y="8.3" width="7.7" height="7.7" fill="#fff"/><path d="M9 9h7l-3.5 3.5L16 16H9z" fill="#b99bf8"/></svg>
<div class="t" style="left:83px;top:666.84px;font-size:12px;line-height:16px;color:#000;letter-spacing:0.006px;">build.gradle.kts</div>
<div class="t" style="left:167.3px;top:666.84px;font-size:12px;line-height:16px;color:#8c8c8c;letter-spacing:-0.011px;">(Project: My_Application)</div>
<svg style="position:absolute;left:64px;top:686px" width="16" height="16" viewBox="0 0 16 16" ><g transform="translate(-.3 .3) scale(.94)"><path d="M.6 13.700C.2 10 1 7 3 5.600 5 4.200 8.600 4 10.600 5c1.300.600 2 1.600 2.300 2.800.200 1 .100 2-.100 3l-.300 2.900H9.600l-.200-1.500h-.800l-.200 1.500H5.400l-.200-1.500h-.800l-.200 1.500z" fill="#9aa7b0"/><path d="M11.500 8.600c2 0 3.500-1.800 3.400-3.800-.100-1.700-1.300-2.500-2.400-2.300-.600.100-1 .400-1.200.800" fill="none" stroke="#9aa7b0" stroke-width="1.900" stroke-linecap="round"/><path d="M3.400 7.800c.900.700 2.100.600 2.900-.300" stroke="#fff" stroke-width=".8" fill="none" opacity=".8"/></g><rect x="8.3" y="8.3" width="7.7" height="7.7" fill="#fff"/><path d="M9 9h7l-3.5 3.5L16 16H9z" fill="#b99bf8"/></svg>
<div class="t" style="left:83px;top:686.84px;font-size:12px;line-height:16px;color:#000;letter-spacing:0.006px;">build.gradle.kts</div>
<div class="t" style="left:167.3px;top:686.84px;font-size:12px;line-height:16px;color:#8c8c8c;letter-spacing:0.012px;">(Module :app)</div>
<svg style="position:absolute;left:64px;top:706px" width="16" height="16" viewBox="0 0 16 16" ><path d="M7 1h6v14H3V5h4z" fill="#aeb9c0"/><path d="M6.5 1v3.500H3z" fill="#b9c2c9"/><path d="M5 7.5h6M5 9.5h6M5 11.5h4" stroke="#4d5b63" stroke-width="1"/></svg>
<div class="t" style="left:83px;top:706.84px;font-size:12px;line-height:16px;color:#000;letter-spacing:0.060px;">proguard-rules.pro</div>
<div class="t" style="left:186.3px;top:706.84px;font-size:12px;line-height:16px;color:#8c8c8c;letter-spacing:-0.166px;">(ProGuard Rules for ":app")</div>
<svg style="position:absolute;left:64px;top:726px" width="16" height="16" viewBox="0 0 16 16" ><path d="M7 1h6v6.5H11.5V9.5H8.5v2H7.5V15H3V5h4z" fill="#aeb9c0"/><path d="M6.5 1v3.500H3z" fill="#b9c2c9"/><rect x="8" y="11" width="2" height="5" fill="#f26522"/><rect x="11" y="9" width="2" height="7" fill="#f4af3d"/><rect x="14" y="7" width="2" height="9" fill="#62b543"/></svg>
<div class="t" style="left:83px;top:726.84px;font-size:12px;line-height:16px;color:#000;letter-spacing:-0.068px;">gradle.properties</div>
<div class="t" style="left:175.4px;top:726.84px;font-size:12px;line-height:16px;color:#8c8c8c;letter-spacing:-0.158px;">(Project Properties)</div>
<svg style="position:absolute;left:64px;top:746px" width="16" height="16" viewBox="0 0 16 16" ><path d="M7 1h6v6.5H11.5V9.5H8.5v2H7.5V15H3V5h4z" fill="#aeb9c0"/><path d="M6.5 1v3.500H3z" fill="#b9c2c9"/><rect x="8" y="11" width="2" height="5" fill="#f26522"/><rect x="11" y="9" width="2" height="7" fill="#f4af3d"/><rect x="14" y="7" width="2" height="9" fill="#62b543"/></svg>
<div class="t" style="left:83px;top:746.84px;font-size:12px;line-height:16px;color:#000;letter-spacing:0.010px;">gradle-wrapper.properties</div>
<div class="t" style="left:223.5px;top:746.84px;font-size:12px;line-height:16px;color:#8c8c8c;letter-spacing:-0.267px;">(Gradle Version)</div>
<svg style="position:absolute;left:64px;top:766px" width="16" height="16" viewBox="0 0 16 16" ><path d="M7 1h6v6H6.5v8H3V5h4z" fill="#aeb9c0"/><path d="M6.5 1v3.500H3z" fill="#b9c2c9"/><path d="M9 8.5H7.5v7H9M14.5 8.5H16v7h-1.5" fill="none" stroke="#555" stroke-width="1"/><path d="M9.8 10.5h4M11.8 10.5v4.3" stroke="#555" stroke-width="1" fill="none"/></svg>
<div class="t" style="left:83px;top:766.84px;font-size:12px;line-height:16px;color:#000;letter-spacing:-0.079px;">libs.versions.toml</div>
<div class="t" style="left:177.1px;top:766.84px;font-size:12px;line-height:16px;color:#8c8c8c;letter-spacing:-0.207px;">(Version Catalog)</div>
<svg style="position:absolute;left:64px;top:786px" width="16" height="16" viewBox="0 0 16 16" ><path d="M7 1h6v6.5H11.5V9.5H8.5v2H7.5V15H3V5h4z" fill="#aeb9c0"/><path d="M6.5 1v3.500H3z" fill="#b9c2c9"/><rect x="8" y="11" width="2" height="5" fill="#f26522"/><rect x="11" y="9" width="2" height="7" fill="#f4af3d"/><rect x="14" y="7" width="2" height="9" fill="#62b543"/></svg>
<div class="t" style="left:83px;top:786.84px;font-size:12px;line-height:16px;color:#000;letter-spacing:-0.036px;">local.properties</div>
<div class="t" style="left:167.3px;top:786.84px;font-size:12px;line-height:16px;color:#8c8c8c;letter-spacing:-0.298px;">(SDK Location)</div>
<svg style="position:absolute;left:64px;top:806px" width="16" height="16" viewBox="0 0 16 16" ><g transform="translate(-.3 .3) scale(.94)"><path d="M.6 13.700C.2 10 1 7 3 5.600 5 4.200 8.600 4 10.600 5c1.300.600 2 1.600 2.300 2.800.200 1 .100 2-.100 3l-.300 2.900H9.600l-.200-1.500h-.800l-.200 1.500H5.400l-.200-1.500h-.800l-.200 1.500z" fill="#9aa7b0"/><path d="M11.500 8.600c2 0 3.500-1.800 3.400-3.800-.100-1.700-1.300-2.500-2.400-2.300-.600.100-1 .400-1.200.800" fill="none" stroke="#9aa7b0" stroke-width="1.900" stroke-linecap="round"/><path d="M3.400 7.800c.900.700 2.100.600 2.900-.300" stroke="#fff" stroke-width=".8" fill="none" opacity=".8"/></g><rect x="8.3" y="8.3" width="7.7" height="7.7" fill="#fff"/><path d="M9 9h7l-3.5 3.5L16 16H9z" fill="#b99bf8"/></svg>
<div class="t" style="left:83px;top:806.84px;font-size:12px;line-height:16px;color:#000;letter-spacing:-0.101px;">settings.gradle.kts</div>
<div class="t" style="left:181.3px;top:806.84px;font-size:12px;line-height:16px;color:#8c8c8c;letter-spacing:-0.158px;">(Project Settings)</div>
<div style="position:absolute;left:1365px;top:57px;width:109px;height:26px;background:#fff;"></div>
<svg style="position:absolute;left:510px;top:62px" width="16" height="16" viewBox="0 0 16 16" ><path d="M7 1h6v7H3V5h4z" fill="#aeb9c0"/><path d="M6.5 1v3.500H3z" fill="#b9c2c9"/><rect x="1" y="9" width="15" height="7" fill="#f4926b"/><path d="M5.9 10.7 3.3 12.7l2.6 2M8.4 10.7l2.6 2-2.6 2" fill="none" stroke="#6b4437" stroke-width="1.1"/></svg>
<div class="t" style="left:531px;top:62.84px;font-size:12px;line-height:16px;color:#000;letter-spacing:-0.021px;">activity_main.xml</div>
<svg style="position:absolute;left:628.5px;top:65.5px" width="8" height="8" viewBox="0 0 8 8"><path d="M.5.5l7 7M7.5.5l-7 7" stroke="#b0b0b0" stroke-width="1" fill="none"/></svg>
<svg style="position:absolute;left:652px;top:62px" width="16" height="16" viewBox="0 0 16 16" ><circle cx="8" cy="8" r="7" fill="#90d1eb"/><path d="M10.4 6.4A2.9 2.9 0 1 0 10.4 9.8" fill="none" stroke="#36474f" stroke-width="1.3"/></svg>
<div class="t" style="left:673px;top:62.84px;font-size:12px;line-height:16px;color:#000;letter-spacing:0.149px;">MainActivity.java</div>
<svg style="position:absolute;left:770px;top:65.5px" width="8" height="8" viewBox="0 0 8 8"><path d="M.5.5l7 7M7.5.5l-7 7" stroke="#b0b0b0" stroke-width="1" fill="none"/></svg>
<svg style="position:absolute;left:794px;top:62px" width="16" height="16" viewBox="0 0 16 16" ><circle cx="8" cy="8" r="7" fill="#90d1eb"/><path d="M10.4 6.4A2.9 2.9 0 1 0 10.4 9.8" fill="none" stroke="#36474f" stroke-width="1.3"/></svg>
<div class="t" style="left:815px;top:62.84px;font-size:12px;line-height:16px;color:#000;letter-spacing:0.009px;">SettingsActivity.java</div>
<svg style="position:absolute;left:927px;top:65.5px" width="8" height="8" viewBox="0 0 8 8"><path d="M.5.5l7 7M7.5.5l-7 7" stroke="#b0b0b0" stroke-width="1" fill="none"/></svg>
<svg style="position:absolute;left:951px;top:62px" width="16" height="16" viewBox="0 0 16 16" ><path d="M7 1h6v7H3V5h4z" fill="#aeb9c0"/><path d="M6.5 1v3.500H3z" fill="#b9c2c9"/><rect x="1" y="9" width="15" height="7" fill="#f4926b"/><path d="M5.9 10.7 3.3 12.7l2.6 2M8.4 10.7l2.6 2-2.6 2" fill="none" stroke="#6b4437" stroke-width="1.1"/></svg>
<div class="t" style="left:972px;top:62.84px;font-size:12px;line-height:16px;color:#000;letter-spacing:0.009px;">settings_activity.xml</div>
<svg style="position:absolute;left:1084px;top:65.5px" width="8" height="8" viewBox="0 0 8 8"><path d="M.5.5l7 7M7.5.5l-7 7" stroke="#b0b0b0" stroke-width="1" fill="none"/></svg>
<svg style="position:absolute;left:1108px;top:62px" width="16" height="16" viewBox="0 0 16 16" ><path d="M7 1h6v7H3V5h4z" fill="#aeb9c0"/><path d="M6.5 1v3.500H3z" fill="#b9c2c9"/><rect x="1" y="9" width="15" height="7" fill="#f4926b"/><path d="M5.9 10.7 3.3 12.7l2.6 2M8.4 10.7l2.6 2-2.6 2" fill="none" stroke="#6b4437" stroke-width="1.1"/></svg>
<div class="t" style="left:1129px;top:62.84px;font-size:12px;line-height:16px;color:#000;letter-spacing:-0.136px;">root_preferences.xml</div>
<svg style="position:absolute;left:1245px;top:65.5px" width="8" height="8" viewBox="0 0 8 8"><path d="M.5.5l7 7M7.5.5l-7 7" stroke="#b0b0b0" stroke-width="1" fill="none"/></svg>
<svg style="position:absolute;left:1269px;top:62px" width="16" height="16" viewBox="0 0 16 16" ><path d="M7 1h6v7H3V5h4z" fill="#aeb9c0"/><path d="M6.5 1v3.500H3z" fill="#b9c2c9"/><rect x="1" y="9" width="15" height="7" fill="#f4926b"/><path d="M5.9 10.7 3.3 12.7l2.6 2M8.4 10.7l2.6 2-2.6 2" fill="none" stroke="#6b4437" stroke-width="1.1"/></svg>
<div class="t" style="left:1290px;top:62.84px;font-size:12px;line-height:16px;color:#000;letter-spacing:-0.234px;">arrays.xml</div>
<svg style="position:absolute;left:1349px;top:65.5px" width="8" height="8" viewBox="0 0 8 8"><path d="M.5.5l7 7M7.5.5l-7 7" stroke="#b0b0b0" stroke-width="1" fill="none"/></svg>
<svg style="position:absolute;left:1373px;top:62px" width="16" height="16" viewBox="0 0 16 16" ><path d="M7 1h6v7H3V5h4z" fill="#aeb9c0"/><path d="M6.5 1v3.500H3z" fill="#b9c2c9"/><rect x="1" y="9" width="15" height="7" fill="#f4926b"/><path d="M5.9 10.7 3.3 12.7l2.6 2M8.4 10.7l2.6 2-2.6 2" fill="none" stroke="#6b4437" stroke-width="1.1"/></svg>
<div class="t" style="left:1394px;top:62.84px;font-size:12px;line-height:16px;color:#000;letter-spacing:-0.031px;">strings.xml</div>
<svg style="position:absolute;left:1457px;top:65.5px" width="8" height="8" viewBox="0 0 8 8"><path d="M.5.5l7 7M7.5.5l-7 7" stroke="#b0b0b0" stroke-width="1" fill="none"/></svg>
<div style="position:absolute;left:502px;top:83px;width:1396px;height:1px;background:#d1d1d1;"></div>
<div style="position:absolute;left:1365px;top:81px;width:109px;height:3px;background:#4083c9;"></div>
<div style="position:absolute;left:1884.5px;top:63px;width:3px;height:3px;border-radius:2px;background:#6e6e6e"></div>
<div style="position:absolute;left:1884.5px;top:68px;width:3px;height:3px;border-radius:2px;background:#6e6e6e"></div>
<div style="position:absolute;left:1884.5px;top:73px;width:3px;height:3px;border-radius:2px;background:#6e6e6e"></div>
<div style="position:absolute;left:502px;top:110px;width:1396px;height:1px;background:#d1d1d1;"></div>
<div class="t" style="left:512px;top:89.84px;font-size:12px;line-height:16px;color:#000;letter-spacing:-0.035px;">Edit translations for all locales in the translations editor.</div>
<div class="t" style="left:1714px;top:89.84px;font-size:12px;line-height:16px;color:#2470b3;letter-spacing:0.027px;">Open editor</div>
<div class="t" style="left:1797px;top:89.84px;font-size:12px;line-height:16px;color:#2470b3;letter-spacing:0.213px;">Hide notification</div>
<div style="position:absolute;left:502px;top:111px;width:1396px;height:863px;background:#fff;"></div>
<div style="position:absolute;left:502px;top:111px;width:59px;height:863px;background:#f2f2f2;"></div>
<div style="position:absolute;left:502px;top:111px;width:1372px;height:22px;background:#fcfaed;"></div>
<div style="position:absolute;left:1874px;top:113px;width:24px;height:20px;background:#fff;border-radius:4px 0 0 0"></div>
<div style="position:absolute;left:550px;top:111px;width:1px;height:418px;background:#5f9090;"></div>
<div style="position:absolute;left:560px;top:111px;width:1px;height:863px;background:#d9d9d9;"></div>
<div style="position:absolute;left:1366px;top:111px;width:1px;height:863px;background:#e3e3e3;"></div>
<div style="position:absolute;left:566px;top:111px;width:8px;height:22px;background:#99d6d5;"></div>
<div style="position:absolute;left:574px;top:111px;width:80px;height:22px;background:#c9eceb;"></div>
<div style="position:absolute;left:566px;top:507px;width:88px;height:22px;background:#c9eceb;"></div>
<div style="position:absolute;left:654px;top:507px;width:8px;height:22px;background:#99d6d5;"></div>
<svg style="position:absolute;left:1878.5px;top:118.5px" width="12" height="10" viewBox="0 0 12 10"><path d="M1 5l3.5 3.5L11 1.5" fill="none" stroke="#4da45f" stroke-width="2.400"/></svg>
<div class="m" style="left:566px;top:111px;line-height:22px;font-size:13.333px;color:#080808;transform:translateY(1.7px) scaleY(1.12)">&lt;<span style="color:#0033b3">resources</span>&gt;</div>
<div class="m" style="left:502px;width:20px;text-align:right;top:111px;line-height:22px;font-size:12.5px;color:#adadad;transform:translateY(1.5px) scaleY(1.12)">1</div>
<div class="m" style="left:566px;top:133px;line-height:22px;font-size:13.333px;color:#080808;transform:translateY(1.7px) scaleY(1.12)">    &lt;<span style="color:#0033b3">string</span> <span style="color:#174ad4">name</span><span style="color:#067d17">="app_name"</span>&gt;My Application&lt;/<span style="color:#0033b3">string</span>&gt;</div>
<div class="m" style="left:502px;width:20px;text-align:right;top:133px;line-height:22px;font-size:12.5px;color:#adadad;transform:translateY(1.5px) scaleY(1.12)">2</div>
<div class="m" style="left:566px;top:155px;line-height:22px;font-size:13.333px;color:#080808;transform:translateY(1.7px) scaleY(1.12)">    &lt;<span style="color:#0033b3">string</span> <span style="color:#174ad4">name</span><span style="color:#067d17">="title_activity_settings"</span>&gt;SettingsActivity&lt;/<span style="color:#0033b3">string</span>&gt;</div>
<div class="m" style="left:502px;width:20px;text-align:right;top:155px;line-height:22px;font-size:12.5px;color:#adadad;transform:translateY(1.5px) scaleY(1.12)">3</div>
<div class="m" style="left:566px;top:177px;line-height:22px;font-size:13.333px;color:#080808;transform:translateY(1.7px) scaleY(1.12)"></div>
<div class="m" style="left:502px;width:20px;text-align:right;top:177px;line-height:22px;font-size:12.5px;color:#adadad;transform:translateY(1.5px) scaleY(1.12)">4</div>
<div class="m" style="left:566px;top:199px;line-height:22px;font-size:13.333px;color:#080808;transform:translateY(1.7px) scaleY(1.12)">    <i style="color:#8c8c8c">&lt;!-- Preference Titles --&gt;</i></div>
<div class="m" style="left:502px;width:20px;text-align:right;top:199px;line-height:22px;font-size:12.5px;color:#adadad;transform:translateY(1.5px) scaleY(1.12)">5</div>
<div class="m" style="left:566px;top:221px;line-height:22px;font-size:13.333px;color:#080808;transform:translateY(1.7px) scaleY(1.12)">    &lt;<span style="color:#0033b3">string</span> <span style="color:#174ad4">name</span><span style="color:#067d17">="messages_header"</span>&gt;Messages&lt;/<span style="color:#0033b3">string</span>&gt;</div>
<div class="m" style="left:502px;width:20px;text-align:right;top:221px;line-height:22px;font-size:12.5px;color:#adadad;transform:translateY(1.5px) scaleY(1.12)">6</div>
<div class="m" style="left:566px;top:243px;line-height:22px;font-size:13.333px;color:#080808;transform:translateY(1.7px) scaleY(1.12)">    &lt;<span style="color:#0033b3">string</span> <span style="color:#174ad4">name</span><span style="color:#067d17">="sync_header"</span>&gt;Sync&lt;/<span style="color:#0033b3">string</span>&gt;</div>
<div class="m" style="left:502px;width:20px;text-align:right;top:243px;line-height:22px;font-size:12.5px;color:#adadad;transform:translateY(1.5px) scaleY(1.12)">7</div>
<div class="m" style="left:566px;top:265px;line-height:22px;font-size:13.333px;color:#080808;transform:translateY(1.7px) scaleY(1.12)"></div>
<div class="m" style="left:502px;width:20px;text-align:right;top:265px;line-height:22px;font-size:12.5px;color:#adadad;transform:translateY(1.5px) scaleY(1.12)">8</div>
<div class="m" style="left:566px;top:287px;line-height:22px;font-size:13.333px;color:#080808;transform:translateY(1.7px) scaleY(1.12)">    <i style="color:#8c8c8c">&lt;!-- Messages Preferences --&gt;</i></div>
<div class="m" style="left:502px;width:20px;text-align:right;top:287px;line-height:22px;font-size:12.5px;color:#adadad;transform:translateY(1.5px) scaleY(1.12)">9</div>
<div class="m" style="left:566px;top:309px;line-height:22px;font-size:13.333px;color:#080808;transform:translateY(1.7px) scaleY(1.12)">    &lt;<span style="color:#0033b3">string</span> <span style="color:#174ad4">name</span><span style="color:#067d17">="signature_title"</span>&gt;Your signature&lt;/<span style="color:#0033b3">string</span>&gt;</div>
<div class="m" style="left:502px;width:20px;text-align:right;top:309px;line-height:22px;font-size:12.5px;color:#adadad;transform:translateY(1.5px) scaleY(1.12)">10</div>
<div class="m" style="left:566px;top:331px;line-height:22px;font-size:13.333px;color:#080808;transform:translateY(1.7px) scaleY(1.12)">    &lt;<span style="color:#0033b3">string</span> <span style="color:#174ad4">name</span><span style="color:#067d17">="reply_title"</span>&gt;Default reply action&lt;/<span style="color:#0033b3">string</span>&gt;</div>
<div class="m" style="left:502px;width:20px;text-align:right;top:331px;line-height:22px;font-size:12.5px;color:#adadad;transform:translateY(1.5px) scaleY(1.12)">11</div>
<div class="m" style="left:566px;top:353px;line-height:22px;font-size:13.333px;color:#080808;transform:translateY(1.7px) scaleY(1.12)"></div>
<div class="m" style="left:502px;width:20px;text-align:right;top:353px;line-height:22px;font-size:12.5px;color:#adadad;transform:translateY(1.5px) scaleY(1.12)">12</div>
<div class="m" style="left:566px;top:375px;line-height:22px;font-size:13.333px;color:#080808;transform:translateY(1.7px) scaleY(1.12)">    <i style="color:#8c8c8c">&lt;!-- Sync Preferences --&gt;</i></div>
<div class="m" style="left:502px;width:20px;text-align:right;top:375px;line-height:22px;font-size:12.5px;color:#adadad;transform:translateY(1.5px) scaleY(1.12)">13</div>
<div class="m" style="left:566px;top:397px;line-height:22px;font-size:13.333px;color:#080808;transform:translateY(1.7px) scaleY(1.12)">    &lt;<span style="color:#0033b3">string</span> <span style="color:#174ad4">name</span><span style="color:#067d17">="sync_title"</span>&gt;Sync email periodically&lt;/<span style="color:#0033b3">string</span>&gt;</div>
<div class="m" style="left:502px;width:20px;text-align:right;top:397px;line-height:22px;font-size:12.5px;color:#adadad;transform:translateY(1.5px) scaleY(1.12)">14</div>
<div class="m" style="left:566px;top:419px;line-height:22px;font-size:13.333px;color:#080808;transform:translateY(1.7px) scaleY(1.12)">    &lt;<span style="color:#0033b3">string</span> <span style="color:#174ad4">name</span><span style="color:#067d17">="attachment_title"</span>&gt;Download incoming attachments&lt;/<span style="color:#0033b3">string</span>&gt;</div>
<div class="m" style="left:502px;width:20px;text-align:right;top:419px;line-height:22px;font-size:12.5px;color:#adadad;transform:translateY(1.5px) scaleY(1.12)">15</div>
<div class="m" style="left:566px;top:441px;line-height:22px;font-size:13.333px;color:#080808;transform:translateY(1.7px) scaleY(1.12)">    &lt;<span style="color:#0033b3">string</span> <span style="color:#174ad4">name</span><span style="color:#067d17">="attachment_summary_on"</span>&gt;Automatically download attachments for incoming emails</div>
<div class="m" style="left:502px;width:20px;text-align:right;top:441px;line-height:22px;font-size:12.5px;color:#adadad;transform:translateY(1.5px) scaleY(1.12)">16</div>
<div class="m" style="left:566px;top:463px;line-height:22px;font-size:13.333px;color:#080808;transform:translateY(1.7px) scaleY(1.12)">    &lt;/<span style="color:#0033b3">string</span>&gt;</div>
<div class="m" style="left:502px;width:20px;text-align:right;top:463px;line-height:22px;font-size:12.5px;color:#adadad;transform:translateY(1.5px) scaleY(1.12)">17</div>
<div class="m" style="left:566px;top:485px;line-height:22px;font-size:13.333px;color:#080808;transform:translateY(1.7px) scaleY(1.12)">    &lt;<span style="color:#0033b3">string</span> <span style="color:#174ad4">name</span><span style="color:#067d17">="attachment_summary_off"</span>&gt;Only download attachments when manually requested&lt;/<span style="color:#0033b3">string</span>&gt;</div>
<div class="m" style="left:502px;width:20px;text-align:right;top:485px;line-height:22px;font-size:12.5px;color:#adadad;transform:translateY(1.5px) scaleY(1.12)">18</div>
<div class="m" style="left:566px;top:507px;line-height:22px;font-size:13.333px;color:#080808;transform:translateY(1.7px) scaleY(1.12)">&lt;/<span style="color:#0033b3">resources</span>&gt;</div>
<div class="m" style="left:502px;width:20px;text-align:right;top:507px;line-height:22px;font-size:12.5px;color:#adadad;transform:translateY(1.5px) scaleY(1.12)">19</div>
<svg style="position:absolute;left:556px;top:118px" width="9" height="11" viewBox="0 0 9 11"><path d="M.5.5h8v6.5l-4 4-4-4z" fill="#fff" stroke="#c4c4c4" stroke-width="1"/><path d="M2.5 4.5h4" stroke="#c4c4c4" stroke-width="1"/></svg>
<svg style="position:absolute;left:556px;top:448px" width="9" height="11" viewBox="0 0 9 11"><path d="M.5.5h8v6.5l-4 4-4-4z" fill="#fff" stroke="#c4c4c4" stroke-width="1"/><path d="M2.5 4.5h4" stroke="#c4c4c4" stroke-width="1"/></svg>
<svg style="position:absolute;left:556px;top:468px" width="9" height="11" viewBox="0 0 9 11"><path d="M.5 10.5h8v-6.5l-4-4-4 4z" fill="#fff" stroke="#c4c4c4" stroke-width="1"/><path d="M2.5 7.5h4" stroke="#c4c4c4" stroke-width="1"/></svg>
<svg style="position:absolute;left:556px;top:512px" width="9" height="11" viewBox="0 0 9 11"><path d="M.5 10.5h8v-6.5l-4-4-4 4z" fill="#fff" stroke="#c4c4c4" stroke-width="1"/><path d="M2.5 7.5h4" stroke="#c4c4c4" stroke-width="1"/></svg>
<svg style="position:absolute;left:573px;top:138px" width="14" height="16" viewBox="0 0 14 16"><circle cx="7" cy="6.8" r="5.3" fill="#eda200"/><rect x="4.2" y="9" width="5.6" height="3" fill="#eda200"/><path d="M4.5 13.2h5M5 15h4" stroke="#6e6e6e" stroke-width="1"/></svg>
<div style="position:absolute;left:502px;top:974px;width:1396px;height:1px;background:#d1d1d1;"></div>
<div class="t" style="left:512px;top:979.34px;font-size:12px;line-height:16px;color:#555;letter-spacing:-0.299px;">resources</div>
<div style="position:absolute;left:0px;top:57px;width:21px;height:85px;background:#bdbdbd;"></div>
<div class="t" style="left:4px;top:114px;font-size:11px;line-height:16px;height:16px;transform-origin:0 0;transform:rotate(-90deg)"><svg class="jp" width="48.00" height="15" viewBox="0 0 48.00 15" fill="#000" style="vertical-align:-3px"><text x="0" y="11.3" font-size="11" textLength="48" lengthAdjust="spacingAndGlyphs">プロジェクト</text></svg></div>
<div class="t" style="left:4px;top:245px;font-size:11px;line-height:16px;height:16px;transform-origin:0 0;transform:rotate(-90deg)"><span style="letter-spacing:-0.096px">Resource Manager</span></div>
<div class="t" style="left:4px;top:777px;font-size:11px;line-height:16px;height:16px;transform-origin:0 0;transform:rotate(-90deg)"><svg class="jp" width="21.00" height="15" viewBox="0 0 21.00 15" fill="#000" style="vertical-align:-3px"><text x="0" y="11.3" font-size="11" textLength="21" lengthAdjust="spacingAndGlyphs">構造</text></svg></div>
<div class="t" style="left:4px;top:861px;font-size:11px;line-height:16px;height:16px;transform-origin:0 0;transform:rotate(-90deg)"><svg class="jp" width="46.00" height="15" viewBox="0 0 46.00 15" fill="#000" style="vertical-align:-3px"><text x="0" y="11.3" font-size="11" textLength="46" lengthAdjust="spacingAndGlyphs">ブックマーク</text></svg></div>
<div class="t" style="left:4px;top:968px;font-size:11px;line-height:16px;height:16px;transform-origin:0 0;transform:rotate(-90deg)"><span style="letter-spacing:0.139px">Build Variants</span></div>
<svg style="position:absolute;left:6px;top:119px" width="12" height="12" viewBox="0 0 12 12" ><path d="M1 1h8v3.5l1.5 1.5v4.5H1z" fill="#6e6e6e"/></svg>
<svg style="position:absolute;left:5px;top:250px" width="13" height="13" viewBox="0 0 13 13" ><path d="M6 1 9.5 6h-7z" fill="#6e6e6e"/><rect x="1" y="7.5" width="4.5" height="4.5" fill="#6e6e6e"/><circle cx="9.5" cy="9.8" r="2.4" fill="#6e6e6e"/></svg>
<svg style="position:absolute;left:6px;top:783px" width="12" height="12" viewBox="0 0 12 12" ><rect x="1.5" y="5.7" width="3.8" height="3.8" fill="#6e6e6e"/><rect x="6.500" y="5.700" width="3.800" height="3.800" fill="#6e6e6e"/><rect x="6.500" y=".7" width="3.800" height="3.800" fill="#6e6e6e"/></svg>
<svg style="position:absolute;left:6px;top:866px" width="12" height="12" viewBox="0 0 12 12" ><path d="M1.5 1h9v10.5L6 8 1.5 11.5z" fill="#6e6e6e"/></svg>
<svg style="position:absolute;left:4.8px;top:969.6px" width="14" height="14" viewBox="0 0 14 14" ><g transform="scale(.84 1.04)"><path d="M1.2 12a6.8 6.8 0 0 1 13.6 0z" fill="#6e6e6e"/><path d="M3.3 4.3 4.8 6.8M12.7 4.3 11.2 6.8" stroke="#6e6e6e" stroke-width="1" stroke-linecap="round"/><circle cx="5" cy="9.3" r=".8" fill="#fff"/><circle cx="11" cy="9.3" r=".8" fill="#fff"/></g></svg>
<svg style="position:absolute;left:1902px;top:66px" width="16" height="14" viewBox="0 0 16 14" ><g transform="translate(-.5 -1.5) scale(.98)"><path d="M.6 13.700C.2 10 1 7 3 5.600 5 4.200 8.600 4 10.600 5c1.300.600 2 1.600 2.300 2.800.200 1 .100 2-.100 3l-.300 2.900H9.600l-.200-1.500h-.800l-.200 1.500H5.400l-.200-1.500h-.800l-.200 1.500z" fill="#6e6e6e"/><path d="M11.500 8.600c2 0 3.500-1.800 3.400-3.800-.100-1.700-1.300-2.500-2.400-2.300-.600.100-1 .400-1.200.800" fill="none" stroke="#6e6e6e" stroke-width="1.900" stroke-linecap="round"/><path d="M3.400 7.800c.900.700 2.100.600 2.900-.300" stroke="#fff" stroke-width=".8" fill="none" opacity=".8"/></g></svg>
<div class="t" style="left:1915.5px;top:83px;font-size:11px;line-height:16px;height:16px;transform-origin:0 0;transform:rotate(90deg)"><span style="letter-spacing:0.081px">Gradle</span></div>
<svg style="position:absolute;left:1903px;top:142.5px" width="13" height="8" viewBox="0 0 13 8" ><path d="M5.200 .8H4A3.200 3.200 0 0 0 4 7.200h1.200M7.800 .8H9a3.200 3.200 0 0 1 0 6.400H7.800M4.300 4h4.400" fill="none" stroke="#6e6e6e" stroke-width="1.600"/></svg>
<div class="t" style="left:1915.5px;top:157px;font-size:11px;line-height:16px;height:16px;transform-origin:0 0;transform:rotate(90deg)"><span style="letter-spacing:-0.125px">App Links Assistant</span></div>
<svg style="position:absolute;left:1903.5px;top:273.5px" width="12" height="12" viewBox="0 0 12 12" ><path d="M6 0c.5 3.5 2 5.2 6 6-4 .8-5.5 2.500-6 6-.5-3.500-2-5.200-6-6 4-.8 5.500-2.500 6-6z" fill="#6e6e6e"/></svg>
<div class="t" style="left:1915.5px;top:290px;font-size:11px;line-height:16px;height:16px;transform-origin:0 0;transform:rotate(90deg)"><span style="letter-spacing:0.093px">Gemini</span></div>
<svg style="position:absolute;left:1903px;top:348px" width="13" height="13" viewBox="0 0 13 13" ><path d="M7 1.5H1.5v10h4" fill="none" stroke="#6e6e6e" stroke-width="1.3"/><path d="M8 1l4 4-4 .3z" fill="#6e6e6e"/><path d="M5.5 12a3.5 3.5 0 0 1 7 0z" fill="#6e6e6e"/></svg>
<div class="t" style="left:1915.5px;top:366.5px;font-size:11px;line-height:16px;height:16px;transform-origin:0 0;transform:rotate(90deg)"><span style="letter-spacing:-0.042px">Device Manager</span></div>
<svg style="position:absolute;left:1904px;top:634px" width="12" height="12" viewBox="0 0 12 12" ><path d="M1 1.500 6 0l5 1.500V6c0 3-2 5-5 6-3-1-5-3-5-6z" fill="#6e6e6e"/><path d="M6 1.500v9C8.500 9.500 9.500 8 9.500 6V2.500z" fill="#f2f2f2"/></svg>
<div class="t" style="left:1915.5px;top:650px;font-size:11px;line-height:16px;height:16px;transform-origin:0 0;transform:rotate(90deg)"><svg class="jp" width="41.00" height="15" viewBox="0 0 41.00 15" fill="#000" style="vertical-align:-3px"><text x="0" y="11.3" font-size="11" textLength="41" lengthAdjust="spacingAndGlyphs">カバレッジ</text></svg></div>
<svg style="position:absolute;left:1902px;top:709.5px" width="15" height="15" viewBox="0 0 13 13" ><path d="M6 1.500c2.200 0 3.500 1.600 3.500 3.700v2.600l1.300 1.700H1.200l1.300-1.700V5.200C2.500 3.100 3.800 1.500 6 1.500zM4.800 10.500h2.400a1.200 1.200 0 0 1-2.400 0z" fill="#6e6e6e" transform="rotate(90 6 6)"/><circle cx="10" cy="2.500" r="2.300" fill="#389fd6"/></svg>
<div class="t" style="left:1915.5px;top:728px;font-size:11px;line-height:16px;height:16px;transform-origin:0 0;transform:rotate(90deg)"><svg class="jp" width="22.00" height="15" viewBox="0 0 22.00 15" fill="#000" style="vertical-align:-3px"><text x="0" y="11.3" font-size="11" textLength="22" lengthAdjust="spacingAndGlyphs">通知</text></svg></div>
<svg style="position:absolute;left:1903px;top:770px" width="13" height="13" viewBox="0 0 13 13" ><path d="M6.500 2.500h-5v9h7V9" fill="none" stroke="#6e6e6e" stroke-width="1.200"/><rect x="8.500" y="1.500" width="3.500" height="6" fill="none" stroke="#6e6e6e" stroke-width="1"/></svg>
<div class="t" style="left:1915.5px;top:788px;font-size:11px;line-height:16px;height:16px;transform-origin:0 0;transform:rotate(90deg)"><span style="letter-spacing:-0.210px">Running Devices</span></div>
<svg style="position:absolute;left:1904px;top:894px" width="12" height="13" viewBox="0 0 12 13" ><rect x="1.7" y="1.2" width="8.6" height="10.6" rx="1" fill="none" stroke="#6e6e6e" stroke-width="1.4"/><path d="M4.500 10h3" stroke="#6e6e6e" stroke-width="1"/></svg>
<div class="t" style="left:1915.5px;top:911.5px;font-size:11px;line-height:16px;height:16px;transform-origin:0 0;transform:rotate(90deg)"><span style="letter-spacing:-0.242px">Device Explorer</span></div>
<svg style="position:absolute;left:33px;top:1003px" width="12" height="13" viewBox="0 0 12 13" ><circle cx="3" cy="2.5" r="1.6" fill="#6e6e6e"/><circle cx="9" cy="3.5" r="1.6" fill="#6e6e6e"/><path d="M3 2.500v9M9 3.500c0 3-3 2.500-6 4.500" stroke="#6e6e6e" stroke-width="1.500" fill="none"/><circle cx="3" cy="10.3" r="1.6" fill="#6e6e6e"/></svg>
<div style="position:absolute;left:50px;top:1002.78px;line-height:0"><svg class="jp" width="62.00" height="15" viewBox="0 0 62.00 15" fill="#000" style=""><text x="0" y="11.3" font-size="11" textLength="62" lengthAdjust="spacingAndGlyphs">バージョン管理</text></svg></div>
<svg style="position:absolute;left:134px;top:1003.5px" width="11" height="11" viewBox="0 0 11 11" ><path d="M0 2h2M0 5.500h2M0 9h2" stroke="#6e6e6e" stroke-width="1.800"/><path d="M3.500 2H11M3.500 5.500H11M3.500 9H11" stroke="#6e6e6e" stroke-width="1.800"/></svg>
<div class="t" style="left:149px;top:1002.19px;font-size:11px;line-height:16px;color:#000;letter-spacing:-0.394px;">TODO</div>
<svg style="position:absolute;left:199px;top:1003.5px" width="11" height="11" viewBox="0 0 11 11" ><circle cx="5.5" cy="5.5" r="5.3" fill="#6e6e6e"/><path d="M5.500 2.500v3.800M5.500 7.600v1.500" stroke="#f2f2f2" stroke-width="1.500"/></svg>
<div style="position:absolute;left:215px;top:1002.78px;line-height:0"><svg class="jp" width="22.00" height="15" viewBox="0 0 22.00 15" fill="#000" style=""><text x="0" y="11.3" font-size="11" textLength="22" lengthAdjust="spacingAndGlyphs">問題</text></svg></div>
<svg style="position:absolute;left:256px;top:1004px" width="11" height="10" viewBox="0 0 11 10" ><rect x="0" y="0" width="11" height="10" fill="#6e6e6e"/><path d="M2 2.500 4.500 5 2 7.500M5.500 8h3.500" stroke="#f2f2f2" stroke-width="1.200" fill="none"/></svg>
<div style="position:absolute;left:271.5px;top:1002.78px;line-height:0"><svg class="jp" width="39.50" height="15" viewBox="0 0 39.50 15" fill="#000" style=""><text x="0" y="11.3" font-size="11" textLength="39.5" lengthAdjust="spacingAndGlyphs">ターミナル</text></svg></div>
<svg style="position:absolute;left:331px;top:1003px" width="12" height="12" viewBox="0 0 12 12" ><path d="M3.500 0h5L12 3.500v5L8.500 12h-5L0 8.500v-5z" fill="#6e6e6e"/><path d="M4.500 3.200 9 6 4.500 8.800z" fill="#f2f2f2"/></svg>
<div style="position:absolute;left:347.5px;top:1002.78px;line-height:0"><svg class="jp" width="33.50" height="15" viewBox="0 0 33.50 15" fill="#000" style=""><text x="0" y="11.3" font-size="11" textLength="33.5" lengthAdjust="spacingAndGlyphs">サービス</text></svg></div>
<svg style="position:absolute;left:403px;top:1003px" width="12" height="12" viewBox="0 0 12 12" ><path d="M3 .7h6l2.500 3.300L6 11.300.5 4z" fill="none" stroke="#6e6e6e" stroke-width="1"/><path d="M.5 4h11M3 .7 4.300 4 6 11.300 7.700 4 9 .7M4.300 4 6 .7 7.700 4" fill="none" stroke="#6e6e6e" stroke-width=".8"/></svg>
<div class="t" style="left:420px;top:1002.19px;font-size:11px;line-height:16px;color:#000;letter-spacing:-0.016px;">App Quality Insights</div>
<svg style="position:absolute;left:542px;top:1002.5px" width="12" height="13" viewBox="0 0 12 13" ><path d="M3.500 1h5l.5 2.500h2L10.500 5H9.500v1H11v1.500H9.500v1h1.500L11.500 10h-2L9 12.500H3L2.500 10h-2L1 8.500h1.500v-1H1V6h1.500V5H1.500L1 3.500h2z" fill="#6e6e6e"/></svg>
<div class="t" style="left:559px;top:1002.19px;font-size:11px;line-height:16px;color:#000;letter-spacing:-0.055px;">App Inspection</div>
<svg style="position:absolute;left:652.5px;top:1003.5px" width="11" height="11" viewBox="0 0 11 11" ><path d="M0 1.500h11M0 5.500h7M0 9.500h11" stroke="#6e6e6e" stroke-width="2"/></svg>
<div class="t" style="left:669px;top:1002.19px;font-size:11px;line-height:16px;color:#000;letter-spacing:-0.254px;">Logcat</div>
<svg style="position:absolute;left:720px;top:1003px" width="12" height="12" viewBox="0 0 12 12" ><path d="M1 3.500 5 .5l2.500 2-1.300 1.200 5.300 6-1.500 1.500-5.500-5.700L3.500 6.500z" fill="#6e6e6e"/></svg>
<div style="position:absolute;left:737px;top:1002.78px;line-height:0"><svg class="jp" width="25.00" height="15" viewBox="0 0 25.00 15" fill="#000" style=""><text x="0" y="11.3" font-size="11" textLength="25" lengthAdjust="spacingAndGlyphs">ビルド</text></svg></div>
<svg style="position:absolute;left:781px;top:1003px" width="12" height="12" viewBox="0 0 12 12" ><path d="M1.200 11A5 5 0 1 1 10.800 11" fill="none" stroke="#6e6e6e" stroke-width="2"/><path d="M5.500 10.500 8.500 5.500" stroke="#6e6e6e" stroke-width="1.700"/></svg>
<div class="t" style="left:798px;top:1002.19px;font-size:11px;line-height:16px;color:#000;letter-spacing:0.020px;">Profiler</div>
<svg style="position:absolute;left:12px;top:1023.5px" width="12" height="12" viewBox="0 0 12 12" ><path d="M3.500 .5h8v8h-8zM.5 3.500v8h8" fill="none" stroke="#6e6e6e" stroke-width="1"/></svg>
<div class="t" style="left:39px;top:1021.84px;font-size:12px;line-height:16px;color:#000;letter-spacing:-0.241px;">Gradle sync finished in 4 s 546 ms (2</div>
<div style="position:absolute;left:230px;top:1021.76px;line-height:0"><svg class="jp" width="24.00" height="16" viewBox="0 0 24.00 16" fill="#000" style=""><text x="0" y="12.3" font-size="12" textLength="24" lengthAdjust="spacingAndGlyphs">分前</text></svg></div>
<div class="t" style="left:253.7px;top:1021.84px;font-size:12px;line-height:16px;color:#000;">)</div>
<div class="t" style="left:1721.5px;top:1021.84px;font-size:12px;line-height:16px;color:#000;letter-spacing:-0.894px;">1:1</div>
<div class="t" style="left:1748.5px;top:1021.84px;font-size:12px;line-height:16px;color:#000;letter-spacing:-1.252px;">LF</div>
<div class="t" style="left:1772px;top:1021.84px;font-size:12px;line-height:16px;color:#8c8c8c;letter-spacing:-0.499px;">UTF-8</div>
<svg style="position:absolute;left:1815px;top:1024px" width="12" height="12" viewBox="0 0 12 12" ><path d="M0 0h12v11.500L9.500 9H0z" fill="#6e6e6e"/><path d="M6 2v3.200M6 6.300v1.200" stroke="#f2f2f2" stroke-width="1.400"/></svg>
<div class="t" style="left:1839px;top:1021.84px;font-size:12px;line-height:16px;color:#000;">4 </div>
<div style="position:absolute;left:1847.5px;top:1021.76px;line-height:0"><svg class="jp" width="37.00" height="16" viewBox="0 0 37.00 16" fill="#000" style=""><text x="0" y="12.3" font-size="12" textLength="37" lengthAdjust="spacingAndGlyphs">スペース</text></svg></div>
<svg style="position:absolute;left:1894px;top:1023px" width="13" height="13" viewBox="0 0 13 13" ><rect x="4" y="5.5" width="8" height="6.5" fill="#6e6e6e"/><path d="M6 5.500V3.500a2.300 2.300 0 0 0-4.600 0V6" fill="none" stroke="#6e6e6e" stroke-width="1.400"/></svg></body></html>
